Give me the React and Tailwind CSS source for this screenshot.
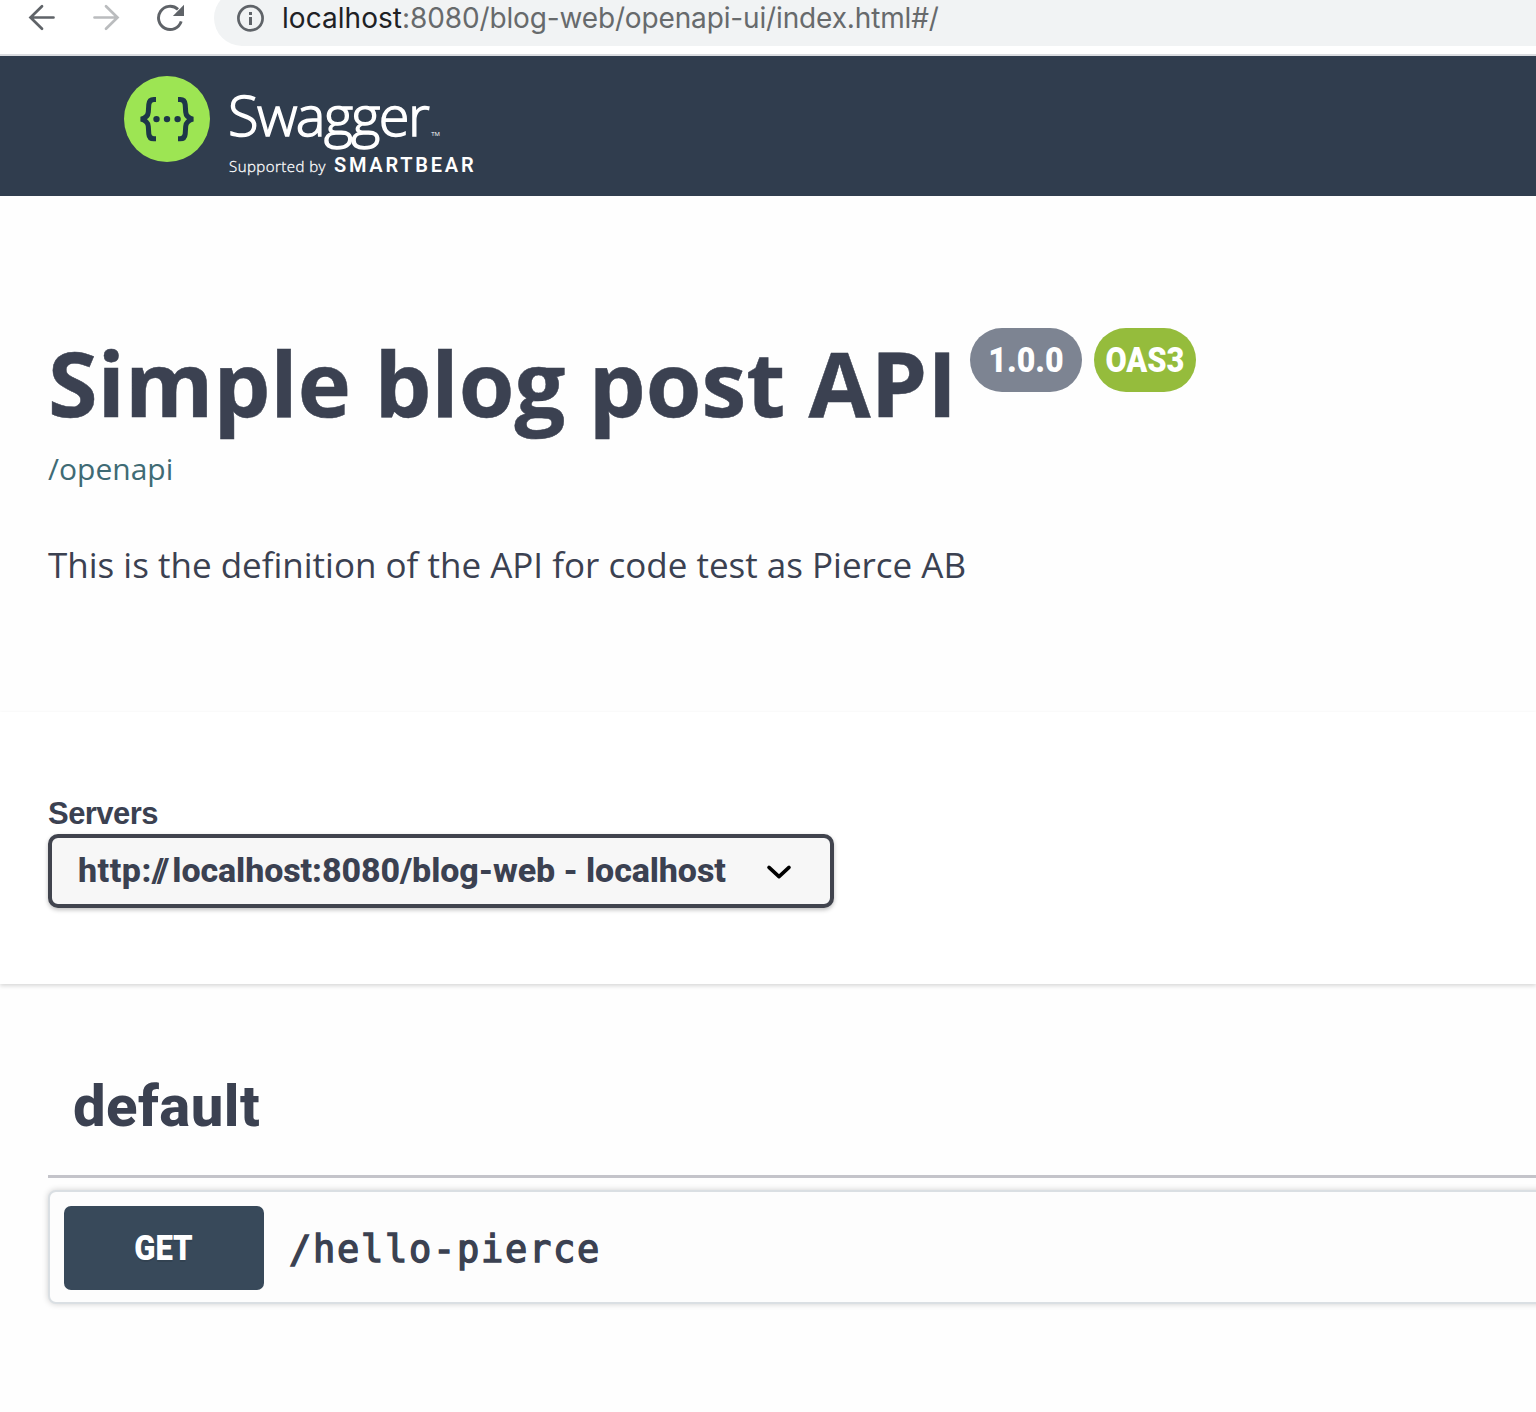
function BrowserBar() {
  return (
    <div className="h-[56px] border-b-2 border-[#dadce0] bg-white overflow-hidden">
      <div className="flex h-[46px] items-start">
        <div className="flex w-[214px] shrink-0 items-start gap-9 pl-7 pt-1">
          <svg className="size-7 shrink-0" viewBox="0 0 28 28" fill="none" stroke="#5f6368" strokeWidth="2.7" strokeLinecap="round">
            <path d="M25.5 13.5H2.7M14 2.2L2.5 13.5L14 24.8" />
          </svg>
          <svg className="size-7 shrink-0" viewBox="0 0 28 28" fill="none" stroke="#babcbe" strokeWidth="2.7" strokeLinecap="round">
            <path d="M2.5 13.5H25.3M14 2.2L25.5 13.5L14 24.8" />
          </svg>
          <svg className="size-7 shrink-0" viewBox="0 0 28 28">
            <path d="M25.2 17.4A11.6 11.6 0 1 1 22 5.4" fill="none" stroke="#5f6368" strokeWidth="2.9" />
            <path d="M28 .8V12H16.9Z" fill="#5f6368" />
          </svg>
        </div>
        <div className="-mt-[10px] flex h-14 flex-1 items-center rounded-l-full bg-[#f1f3f4] pl-[22px]">
          <svg className="size-7 shrink-0" viewBox="0 0 28 28">
            <circle cx="14.5" cy="14.3" r="12.1" fill="none" stroke="#5f6368" strokeWidth="2.7" />
            <path d="M13 8h3v3h-3zM13 12.9h3v8h-3z" fill="#5f6368" />
          </svg>
          <span className="ml-[18px] whitespace-nowrap font-[Inter,sans-serif] text-[28px] leading-[36px] tracking-[-0.14px] text-[#676a6c]">
            <span className="tracking-[0.05px] text-[#202124]">localhost</span>:8080/blog-web/openapi-ui/index.html#/
          </span>
        </div>
      </div>
    </div>
  );
}

function SwaggerMark() {
  return (
    <svg className="mt-5 size-[86px] shrink-0" viewBox="0 0 86 86">
      <circle cx="43" cy="43" r="43" fill="#9de553" />
      <g fill="none" stroke="#1d3748" strokeWidth="5">
        <path d="M32 23.5H29.8Q25.2 23.5 24.8 28.5L24.3 36Q24 41.5 17 43.2Q24 45 24.3 50.4L24.8 58Q25.2 62.8 29.8 62.8H32" />
        <path d="M54 23.5H56.2Q60.8 23.5 61.2 28.5L61.7 36Q62 41.5 69 43.2Q62 45 61.7 50.4L61.2 58Q60.8 62.8 56.2 62.8H54" />
      </g>
      <g fill="#1d3748">
        <circle cx="32.5" cy="43.1" r="3.2" />
        <circle cx="43" cy="43.1" r="3.2" />
        <circle cx="53.6" cy="43.1" r="3.2" />
      </g>
    </svg>
  );
}

function TopBar() {
  return (
    <header className="flex h-[140px] bg-[#303d4e] pl-[124px] text-white">
      <SwaggerMark />
      <div className="ml-[17px] flex flex-col whitespace-nowrap">
        <div className="mt-[21px] flex h-[76px]">
          <span className="ml-px font-['Open_Sans',sans-serif] text-[56px] font-light leading-[74px] tracking-[-1.6px] [-webkit-text-stroke:1.4px_#fff]">Swagger</span>
          <span className="ml-[3px] mt-[53px] font-['Open_Sans',sans-serif] text-[6px] leading-[8px]">TM</span>
        </div>
        <div className="flex h-6 items-center pl-[2px]">
          <span className="mt-[2px] font-['Open_Sans',sans-serif] text-[15px] font-light leading-6 tracking-[0.46px] [-webkit-text-stroke:0.3px_#fff]">Supported by</span>
          <span className="ml-[8px] font-[Roboto,sans-serif] text-[20px] font-semibold leading-6 tracking-[2.75px]">SMARTBEAR</span>
        </div>
      </div>
    </header>
  );
}

function Info() {
  return (
    <section className="h-[516px] pl-12 pt-[126px] text-[#3b4151]">
      <div className="flex">
        <h1 className="whitespace-nowrap font-['Open_Sans',sans-serif] text-[90px] font-bold leading-[120px] [-webkit-text-stroke:0.5px_#3b4151]">Simple blog post API</h1>
        <span className="ml-[13px] mt-[6px] flex h-16 w-[112px] items-center justify-center rounded-[32px] bg-[#7d8492] pt-[2px] font-[Roboto,sans-serif] text-[35px] font-black text-white">
          <span className="scale-x-[0.92]">1.0.0</span>
        </span>
        <span className="ml-3 mt-[6px] flex h-16 w-[102px] items-center justify-center rounded-[32px] bg-[#95bc3c] pt-[2px] font-[Roboto,sans-serif] text-[35px] font-black text-white">
          <span className="scale-x-[0.88]">OAS3</span>
        </span>
      </div>
      <a className="mt-[7px] block font-['Open_Sans',sans-serif] text-[30px] leading-[40px] text-[#3f6b75]">/openapi</a>
      <p className="mt-[52px] font-['Open_Sans',sans-serif] text-[35px] leading-[48px]">This is the definition of the API for code test as Pierce AB</p>
    </section>
  );
}

function Servers() {
  return (
    <section className="h-[272px] bg-white pl-12 pt-[83px] text-[#3b4151] shadow-[0_2px_4px_rgba(0,0,0,0.15)]">
      <div className="font-['Liberation_Sans',sans-serif] text-[31px] font-bold leading-[38px] tracking-[-0.55px]">Servers</div>
      <div className="mt-[1px] flex h-[74px] w-[786px] items-center justify-between rounded-[10px] border-4 border-[#41444e] bg-[#f7f7f7] pl-[26px] pr-[38px] shadow-[0_2px_4px_rgba(0,0,0,0.25)]">
        <span className="-mt-[2px] whitespace-nowrap font-[Roboto,sans-serif] text-[34px] font-extrabold tracking-[-0.1px]">
          <span className="tracking-[0.5px]">http:</span><span className="tracking-[-3px]">//</span><span className="ml-[6px]">localhost:8080/blog-web - localhost</span>
        </span>
        <svg className="mt-px h-4 w-[26px] shrink-0" viewBox="0 0 26 16" fill="none" stroke="#000" strokeWidth="3.6" strokeLinecap="round" strokeLinejoin="round">
          <path d="M3 3.4L13 12.6L23 3.4" />
        </svg>
      </div>
    </section>
  );
}

function Operations() {
  return (
    <section className="overflow-hidden pl-12 pt-[60px] text-[#3b4151]">
      <h2 className="flex h-[134px] items-center border-b-[3px] border-[#c4c4ca] pb-[6px] pl-[25px] font-[Roboto,sans-serif] text-[58px] font-extrabold tracking-[0.45px]">default</h2>
      <div className="mb-3 mt-3 flex h-[114px] w-[1600px] items-center rounded-[8px] border-2 border-[#dadfe3] bg-[#fdfdfd] pl-[14px] pt-[2px] shadow-[0_0_6px_rgba(0,0,0,0.19)]">
        <span className="flex h-[84px] w-[200px] items-center justify-center rounded-[7px] bg-[#38495a] pt-[2px] font-[Roboto,sans-serif] text-[34.5px] font-black text-white [text-shadow:0_2px_0_rgba(0,0,0,0.1)]">
          <span className="-ml-[2px] scale-x-[0.9]">GET</span>
        </span>
        <span className="ml-[25px] mt-[3px] font-['DejaVu_Sans_Mono',monospace] text-[37px] leading-[48px] tracking-[1.72px] [-webkit-text-stroke:1.4px_#3b4151]">/hello-pierce</span>
      </div>
    </section>
  );
}

export default function App() {
  return (
    <div className="h-[1412px] w-[1536px] overflow-hidden bg-[#fefefe]">
      <BrowserBar />
      <TopBar />
      <Info />
      <Servers />
      <Operations />
    </div>
  );
}
